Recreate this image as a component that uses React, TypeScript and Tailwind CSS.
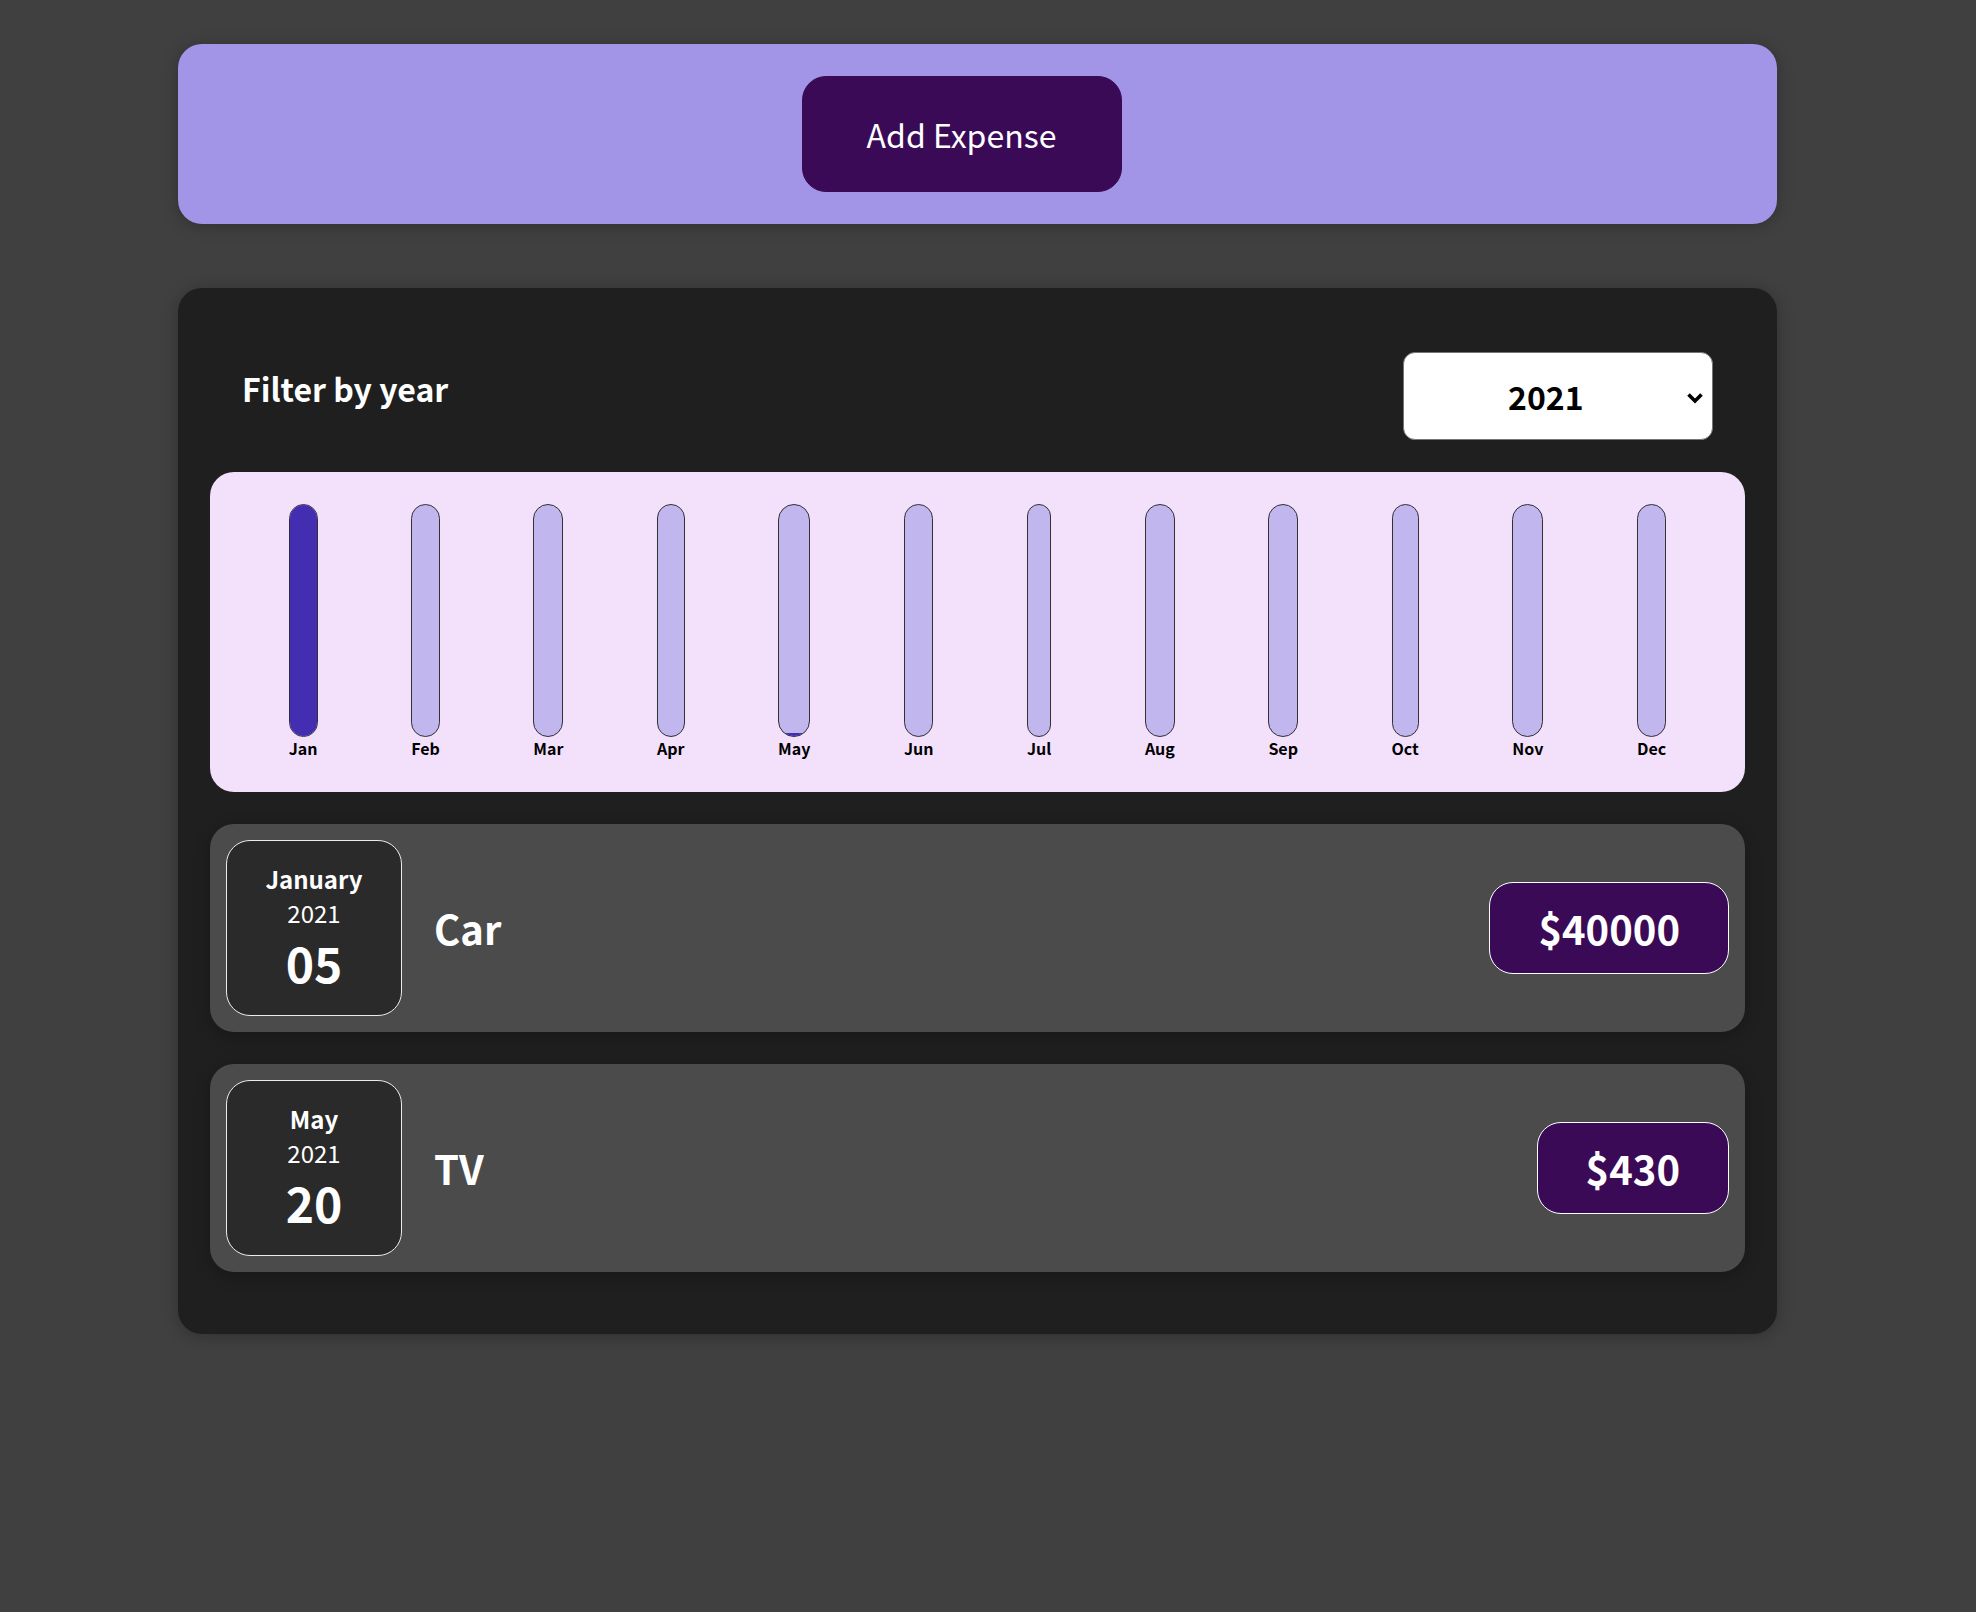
import React from "react";

const months = ["Jan", "Feb", "Mar", "Apr", "May", "Jun", "Jul", "Aug", "Sep", "Oct", "Nov", "Dec"];
const values = [40000, 0, 0, 0, 430, 0, 0, 0, 0, 0, 0, 0];
const maxValue = 40000;

const expenses = [
  { month: "January", year: "2021", day: "05", title: "Car", amount: "$40000" },
  { month: "May", year: "2021", day: "20", title: "TV", amount: "$430" },
];

function ChartBar({ label, value }: { label: string; value: number }) {
  const pct = maxValue > 0 ? Math.round((value / maxValue) * 1000) / 10 + "%" : "0%";
  return (
    <div className="flex h-full flex-col items-center">
      <div className="flex w-full flex-1 flex-col justify-end overflow-hidden rounded-[24px] border border-[#313131] bg-[#c2b6ef]">
        <div className="w-full bg-[#432db1]" style={{ height: pct }} />
      </div>
      <div className="text-center text-[16px] font-bold leading-[23px] text-black">{label}</div>
    </div>
  );
}

function ExpenseDate({ month, year, day }: { month: string; year: string; day: string }) {
  return (
    <div className="flex h-[176px] w-[176px] shrink-0 flex-col items-center justify-center rounded-[24px] border border-[#ececec] bg-[#2a2a2a] text-white">
      <div className="text-[24px] font-bold leading-[34px]">{month}</div>
      <div className="text-[24px] leading-[34px]">{year}</div>
      <div className="text-[48px] font-bold leading-[64px]">{day}</div>
    </div>
  );
}

export default function App() {
  return (
    <div className="min-h-screen bg-[#404040] pt-[44px] pb-[64px] font-['Noto_Sans_CJK_JP',sans-serif]">
      <div className="ml-[178px] w-[1599px] rounded-[24px] bg-[#a294e6] p-[32px] text-center shadow-[0_2px_16px_rgba(0,0,0,0.25)]">
        <button className="mr-[32px] inline-flex h-[116px] w-[320px] items-center justify-center rounded-[24px] border border-[#3b0a57] bg-[#3b0a57] text-[32px] text-white">
          Add Expense
        </button>
      </div>

      <div className="ml-[178px] mt-[64px] w-[1599px] rounded-[24px] bg-[#1f1f1f] p-[32px] shadow-[0_2px_16px_rgba(0,0,0,0.25)]">
        <div className="px-[32px] text-white">
          <div className="my-[32px] flex w-full items-center justify-between">
            <label className="mb-[16px] text-[32px] font-bold">Filter by year</label>
            <div className="relative flex h-[88px] w-[310px] items-center rounded-[12px] border border-[#767676] bg-white pl-[104px] text-[32px] font-bold text-black">
              2021
              <svg
                className="absolute right-[8px] top-[39px]"
                width="18"
                height="12"
                viewBox="0 0 18 12"
                fill="none"
              >
                <path d="M2.5 2.5 L9 9 L15.5 2.5" stroke="#000" strokeWidth="3.6" />
              </svg>
            </div>
          </div>
        </div>

        <div className="flex h-[320px] justify-around rounded-[24px] bg-[#f3e0fb] p-[32px] text-center">
          {months.map((m, i) => (
            <ChartBar key={m} label={m} value={values[i]} />
          ))}
        </div>

        <ul className="mt-[32px] flex flex-col gap-[32px]">
          {expenses.map((e) => (
            <li
              key={e.title}
              className="flex items-center justify-between rounded-[24px] bg-[#4b4b4b] p-[16px] shadow-[0_4px_16px_rgba(0,0,0,0.25)]"
            >
              <div className="flex flex-1 items-center">
                <ExpenseDate month={e.month} year={e.year} day={e.day} />
                <h2 className="mx-[32px] flex-1 text-[40px] font-bold text-white">{e.title}</h2>
                <div className="flex h-[92px] items-center rounded-[24px] border border-white bg-[#3b0a57] px-[48px] text-[40px] font-bold text-white">
                  {e.amount}
                </div>
              </div>
            </li>
          ))}
        </ul>
        <div className="h-[30px]" />
      </div>
    </div>
  );
}
